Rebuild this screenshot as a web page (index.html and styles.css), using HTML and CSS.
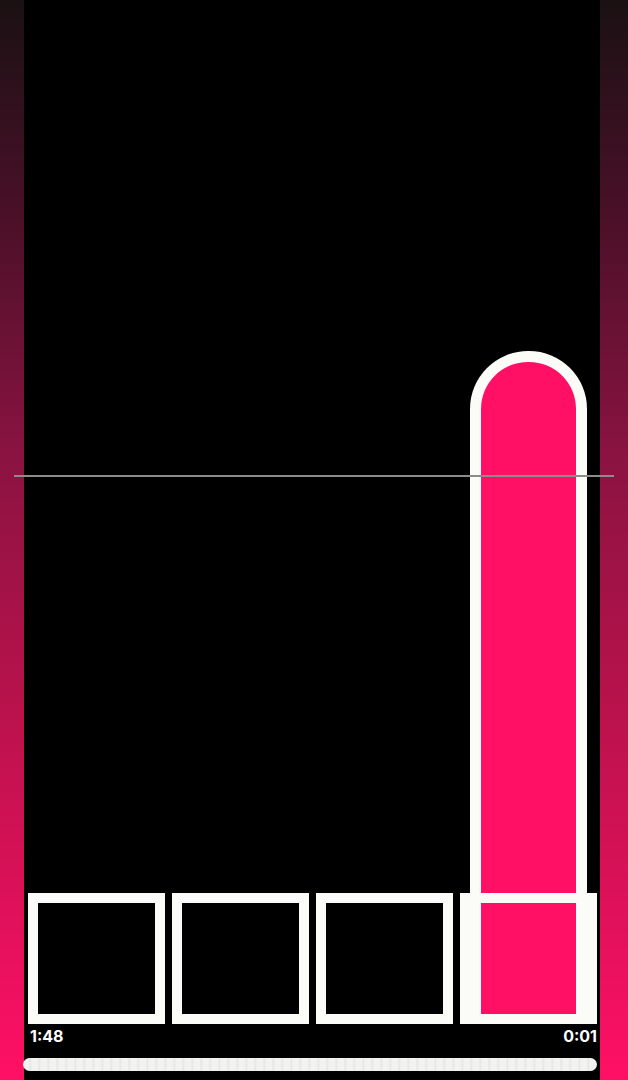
FILE: index.html
```html
<!DOCTYPE html>
<html lang="en">
<head>
  <meta charset="UTF-8" />
  <meta name="viewport" content="width=device-width, initial-scale=1.0"/>
  <title>Recorder</title>
  <link rel="stylesheet" href="styles.css">
</head>
<body>
  <div class="page">
    <div class="side side-left"></div>

    <div class="main">
      <div class="chart">
        <div class="level-bar"></div>
      </div>

      <div class="slots">
        <div class="slot"></div>
        <div class="slot"></div>
        <div class="slot"></div>
        <div class="slot"></div>
      </div>

      <div class="times">
        <span>1:48</span>
        <span>0:01</span>
      </div>

      <div class="progress"></div>
    </div>

    <div class="side side-right"></div>

    <div class="guide"></div>
  </div>
</body>
</html>
```

FILE: styles.css
```css
body {
  margin: 0;
  background-color: #000;
  font-family: Inter, 'Noto Sans', sans-serif;
  color: #fff;
}

.page {
  position: relative;
  display: flex;
  height: 1080px;
  overflow: hidden;
}

.side {
  background: linear-gradient(to bottom, #1a1113 0%, #4a1028 20%, #8a1341 42%, #b8124b 65%, #ff1065 100%);
}

.side-left {
  width: 24px;
}

.side-right {
  width: 28px;
}

.main {
  position: relative;
  width: 576px;
  background-color: #000;
  display: flex;
  flex-direction: column;
}

.chart {
  height: 893px;
}

/* bar sits under the slot frames */
.level-bar {
  position: absolute;
  left: 446px;
  top: 351px;
  width: 95px;
  height: 652px;
  background-color: #ff1065;
  border: 11px solid #fbfbf8;
  border-bottom: none;
  border-radius: 58px 58px 0 0;
}

.slots {
  position: relative;
  z-index: 1;
  display: flex;
  gap: 7px;
  padding-left: 4px;
}

.slot {
  width: 117px;
  height: 111px;
  border: 10px solid #fbfbf8;
}

.times {
  display: flex;
  justify-content: space-between;
  padding: 2px 3px 0 6px;
  font-size: 16px;
  font-weight: 700;
  line-height: 20px;
}

.progress {
  margin: 12px 3px 0 -1px;
  height: 13px;
  border-radius: 7px;
  background: repeating-linear-gradient(to right, #f2f2f0 0, #f2f2f0 6px, #e4e4e2 7px, #f2f2f0 9px);
}

.guide {
  position: absolute;
  left: 14px;
  top: 475px;
  width: 600px;
  height: 2px;
  background-color: #8c8c8c;
}
```
